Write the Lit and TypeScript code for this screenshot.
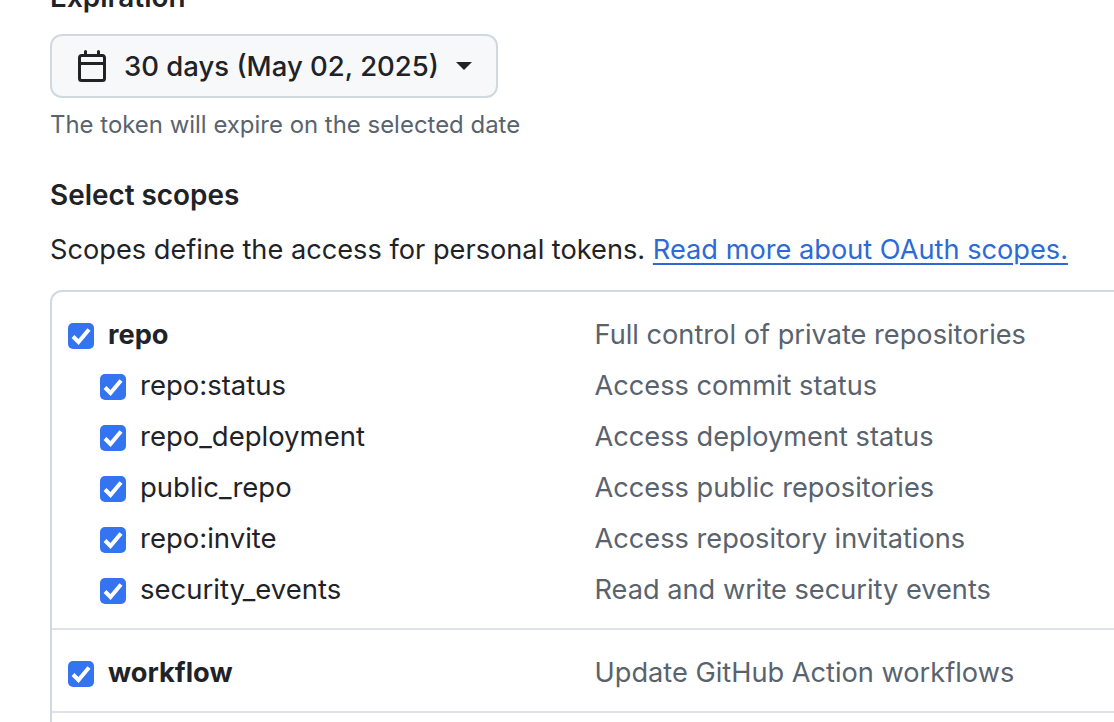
import { LitElement, html, css } from "lit";
import { customElement } from "lit/decorators.js";

const subs = [
  ["repo:status", "Access commit status"],
  ["repo_deployment", "Access deployment status"],
  ["public_repo", "Access public repositories"],
  ["repo:invite", "Access repository invitations"],
  ["security_events", "Read and write security events"],
];

const check = html`<span class="cb"><svg viewBox="0 0 26 26" width="26" height="26"><path d="M5 13.5 L10.5 19 L21 6.5" fill="none" stroke="#fff" stroke-width="4"/></svg></span>`;

@customElement("app-root")
export class AppRoot extends LitElement {
  static styles = css`
    :host { display: block; width: 1114px; height: 722px; overflow: hidden; background: #fff; font-family: Inter, "Liberation Sans", sans-serif; color: #1f2328; font-size: 27.2px; }
    .page { padding-left: 50px; margin-top: -20px; width: 1200px; box-sizing: border-box; }
    .label { font-weight: 600; font-size: 27.9px; line-height: 34px; }
    .exp { height: 34px; }
    .btn { margin-top: 20px; width: 448px; height: 64px; box-sizing: border-box; border: 2px solid #d1d9e0; border-radius: 12px; background: #f6f8fa; display: flex; align-items: center; padding-left: 24px; gap: 16px; font-weight: 500; font-size: 27.5px; }
    .btn svg { display: block; flex: none; }
    .caret { width: 0; height: 0; border-left: 8px solid transparent; border-right: 8px solid transparent; border-top: 8px solid #1f2328; margin-left: 1px; }
    .hint { color: #59636e; font-size: 23.95px; line-height: 30px; margin-top: 12px; }
    .sel { margin-top: 38px; }
    .intro { margin-top: 21px; line-height: 34px; font-size: 27.2px; }
    .intro a { color: #2d6ad6; text-decoration: underline; text-decoration-thickness: 2px; text-underline-offset: 4px; }
    .box { margin-top: 23px; border: 2px solid #d1d9e0; border-radius: 12px; padding-top: 17px; }
    .row { display: grid; grid-template-columns: 526.5px 1fr; height: 51px; align-items: center; padding-left: 16px; line-height: 34px; }
    .row.sub { padding-left: 48px; grid-template-columns: 494.5px 1fr; }
    .name { display: flex; align-items: center; gap: 14px; font-size: 27.5px; }
    .row.sub .name span:last-child { margin-top: -2px; }
    .row.top .name { font-weight: 700; font-size: 27.25px; }
    .desc { color: #59636e; }
    .cb { width: 26px; height: 26px; background: #3574f0; border-radius: 5px; display: block; flex: none; margin-top: 3px; }
    .cb svg { display: block; }
    hr { border: 0; height: 2px; background: #dfe3e8; margin: 0; }
    .g1 { padding-bottom: 13px; }
    .g2 { padding: 17px 0 13px; }
    .rest { height: 40px; }
  `;

  render() {
    return html`<div class="page">
      <div class="label exp">Expiration</div>
      <div class="btn">
        <svg viewBox="0 0 16 16" width="32" height="32" fill="#1f2328"><path d="M4.75 0a.75.75 0 0 1 .75.75V2h5V.75a.75.75 0 0 1 1.5 0V2h1.25c.966 0 1.75.784 1.75 1.75v10.5A1.75 1.75 0 0 1 13.25 16H2.75A1.75 1.75 0 0 1 1 14.25V3.75C1 2.784 1.784 2 2.75 2H4V.75A.75.75 0 0 1 4.75 0ZM2.5 7.5v6.75c0 .138.112.25.25.25h10.5a.25.25 0 0 0 .25-.25V7.5Zm10.75-4H2.75a.25.25 0 0 0-.25.25V6h11V3.75a.25.25 0 0 0-.25-.25Z"/></svg>
        <span>30 days (May 02, 2025)</span>
        <span class="caret"></span>
      </div>
      <div class="hint">The token will expire on the selected date</div>
      <div class="label sel">Select scopes</div>
      <div class="intro">Scopes define the access for personal tokens. <a>Read more about OAuth scopes.</a></div>
      <div class="box">
        <div class="g1">
          <div class="row top"><div class="name">${check}<span>repo</span></div><div class="desc">Full control of private repositories</div></div>
          ${subs.map(([n, d]) => html`<div class="row sub"><div class="name">${check}<span>${n}</span></div><div class="desc">${d}</div></div>`)}
        </div>
        <hr />
        <div class="g2"><div class="row top"><div class="name">${check}<span>workflow</span></div><div class="desc">Update GitHub Action workflows</div></div></div>
        <hr />
        <div class="rest"></div>
      </div>
    </div>`;
  }
}
